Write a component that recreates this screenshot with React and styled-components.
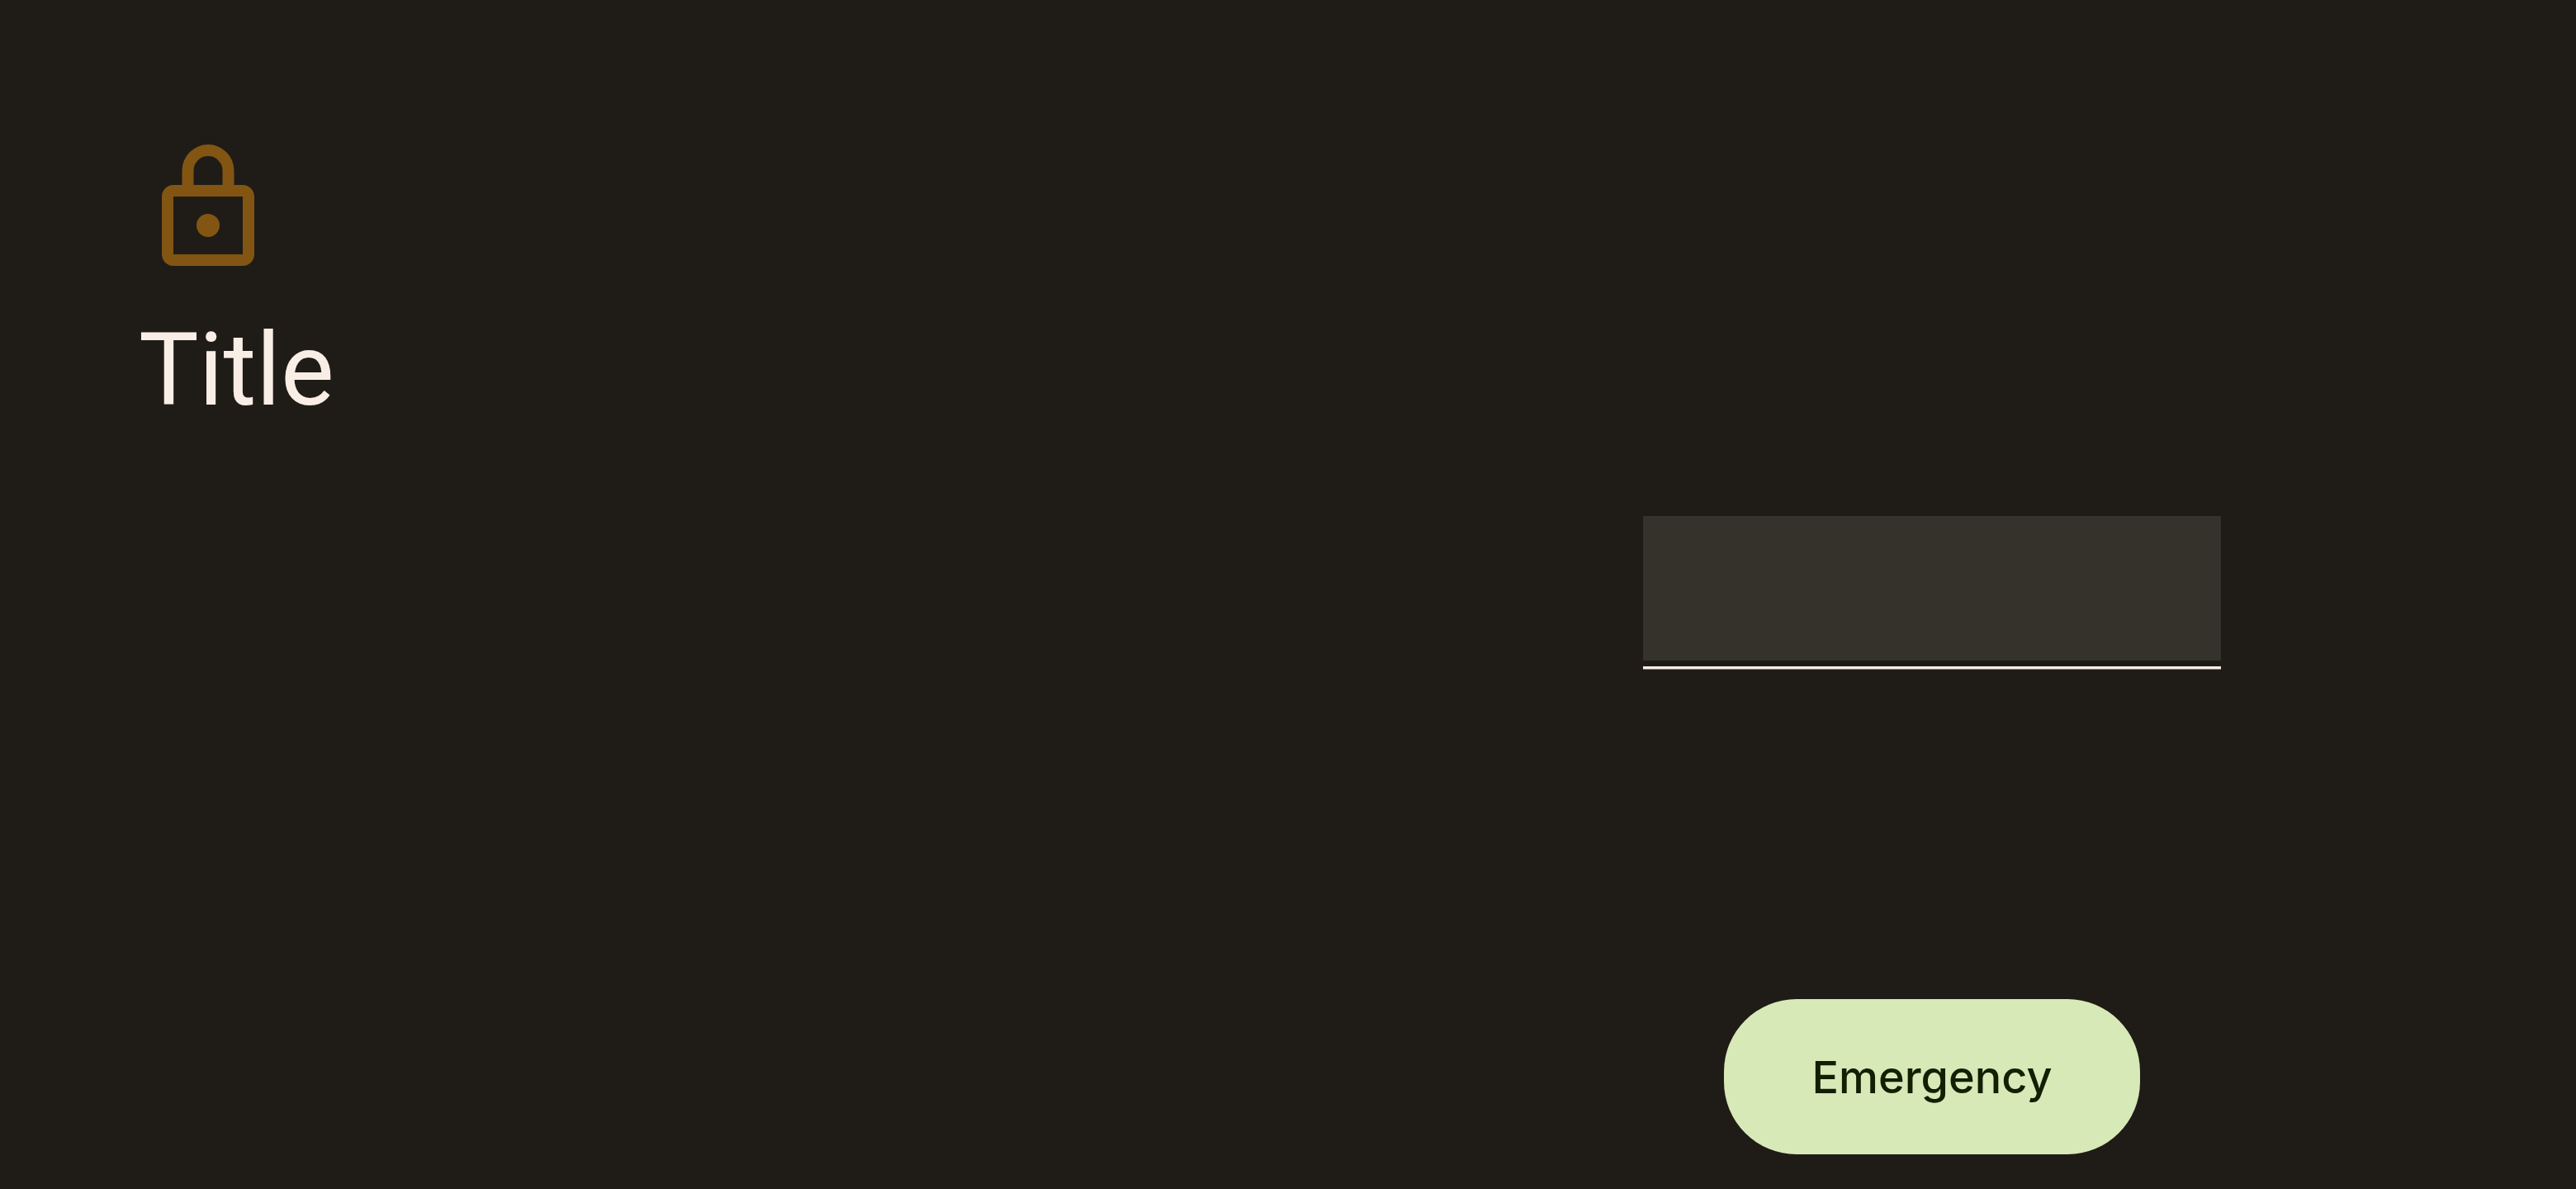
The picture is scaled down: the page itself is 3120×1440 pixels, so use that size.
import styled, { createGlobalStyle } from "styled-components";

const GlobalStyle = createGlobalStyle`
  *, *::before, *::after { box-sizing: border-box; }
  body { margin: 0; background: #1f1c17; }
`;

const Screen = styled.main`
  min-height: 100vh;
  display: grid;
  grid-template-columns: 1fr 1fr;
  background: #1f1c17;
  font-family: Roboto, sans-serif;
`;

const Heading = styled.header`
  display: flex;
  flex-direction: column;
  align-items: flex-start;
  gap: 32px;
  padding: 168px;
`;

const LockIcon = styled.svg`
  width: 168px;
  height: 168px;
  fill: #825513;
`;

const Title = styled.h1`
  margin: 0;
  color: #f9eee6;
  font-size: 122px;
  font-weight: 400;
  line-height: 162px;
`;

const Credentials = styled.form`
  display: grid;
  grid-template-rows: 1fr auto 1fr;
  justify-items: center;
  padding: 37px 0 42px;
`;

const PasswordBox = styled.div`
  grid-row: 2;
  width: 700px;
  max-width: 100%;
  padding-bottom: 7px;
  border-bottom: 3px solid #fbeee5;
  box-shadow: 0 1px 0 #8f867e;
`;

const PasswordInput = styled.input`
  display: block;
  width: 100%;
  height: 175px;
  margin: 0;
  padding: 0 28px;
  border: 0;
  border-radius: 0;
  outline: none;
  background: #35322b;
  color: #f9eee6;
  font: 400 54px Roboto, sans-serif;
  text-align: center;
`;

const EmergencyButton = styled.button`
  grid-row: 3;
  align-self: end;
  height: 188px;
  padding: 0 107px;
  border: 0;
  border-radius: 88px;
  background: #d8e9b8;
  color: #131f00;
  font: 500 54px Inter, sans-serif;
  cursor: pointer;
`;

export default function App() {
  return (
    <>
      <GlobalStyle />
      <Screen>
        <Heading>
          <LockIcon viewBox="0 0 24 24" aria-hidden="true">
            <path
              fillRule="evenodd"
              d="M18 8h-1.5V5.5a4.5 4.5 0 0 0-9 0V8H6c-1.1 0-2 .9-2 2v10c0 1.1.9 2 2 2h12c1.1 0 2-.9 2-2V10c0-1.1-.9-2-2-2zM9.5 5.5a2.5 2.5 0 0 1 5 0V8h-5V5.5zM18 20H6V10h12v10z"
            />
            <circle cx="12" cy="15" r="2" />
          </LockIcon>
          <Title>Title</Title>
        </Heading>
        <Credentials onSubmit={(e) => e.preventDefault()}>
          <PasswordBox>
            <PasswordInput type="password" aria-label="Password" />
          </PasswordBox>
          <EmergencyButton type="button">Emergency</EmergencyButton>
        </Credentials>
      </Screen>
    </>
  );
}
